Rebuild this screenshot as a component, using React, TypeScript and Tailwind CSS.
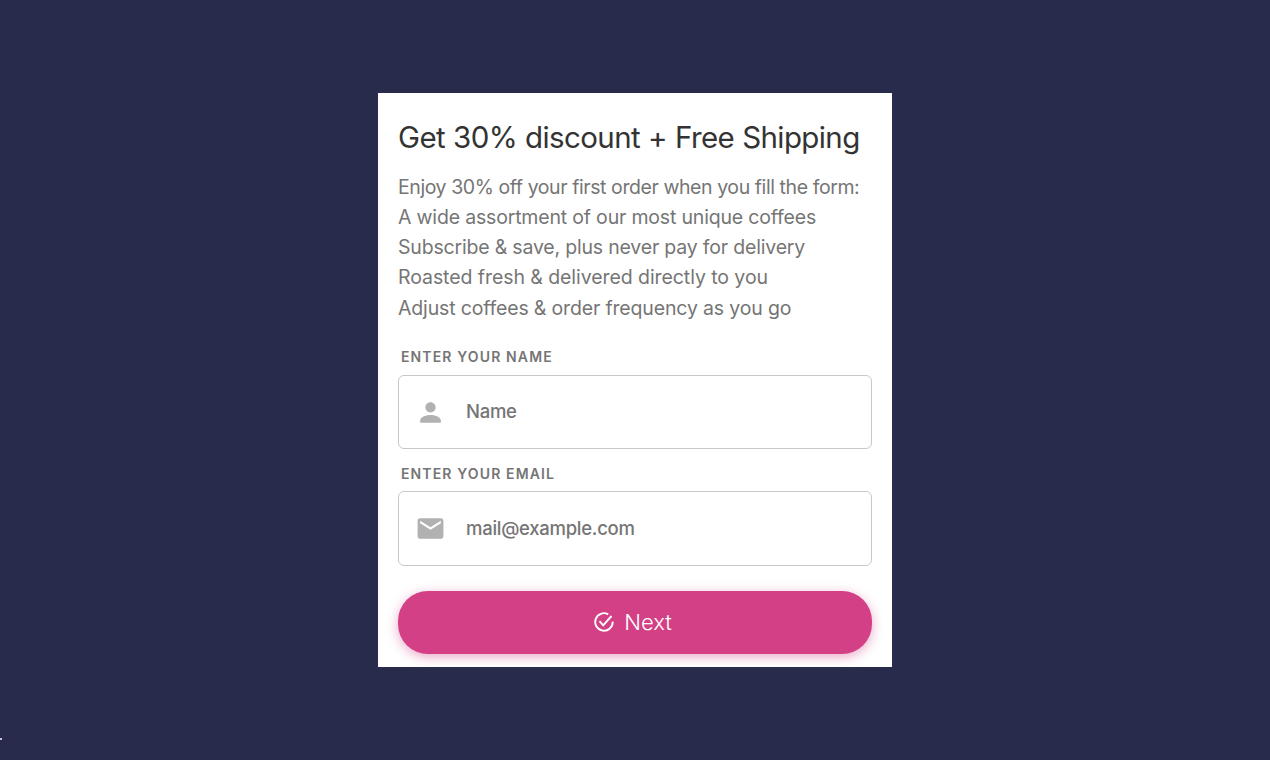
import type { ReactNode } from 'react';
import { MdEmail, MdPerson } from 'react-icons/md';

const BENEFITS = [
  { text: 'Enjoy 30% off your first order when you fill the form:', className: 'tracking-[-0.42px]' },
  { text: 'A wide assortment of our most unique coffees', className: 'tracking-[-0.18px]' },
  { text: 'Subscribe & save, plus never pay for delivery', className: 'tracking-[-0.19px]' },
  { text: 'Roasted fresh & delivered directly to you', className: 'tracking-[-0.07px]' },
  { text: 'Adjust coffees & order frequency as you go', className: 'tracking-[-0.16px]' },
];

interface FieldProps {
  id: string;
  type: string;
  label: string;
  placeholder: string;
  icon: ReactNode;
  className?: string;
  boxClassName: string;
}

function Field({ id, type, label, placeholder, icon, className = '', boxClassName }: FieldProps) {
  return (
    <div className={className}>
      <label
        htmlFor={id}
        className="block h-5 pl-[3px] text-[14px] font-semibold leading-5 tracking-[1.13px] text-[#757575]"
      >
        <span>{label}</span>
      </label>
      <div
        className={`flex items-center rounded-[6px] border border-[#c8c8c8] bg-white pl-4 ${boxClassName}`}
      >
        <span className="shrink-0 text-[31px] text-[#b1b1b1]">{icon}</span>
        <input
          id={id}
          type={type}
          placeholder={placeholder}
          className="ml-5 min-w-0 flex-1 bg-transparent text-[18.5px] font-medium tracking-[-0.27px] text-[#757575] outline-none placeholder:text-[#757575]"
        />
      </div>
    </div>
  );
}

function CheckRingIcon() {
  return (
    <svg
      viewBox="0 0 24 24"
      fill="none"
      stroke="currentColor"
      strokeWidth="1.9"
      className="mb-[2px] size-6 shrink-0"
      aria-hidden
    >
      <path d="M16.2 4.3A8.75 8.75 0 1 0 20.7 11.6" />
      <path d="M7.5 11.1l3.7 4.3 8.3-9.4" />
    </svg>
  );
}

export default function App() {
  return (
    <div className="relative flex h-[760px] w-full justify-center overflow-hidden bg-[#292b4c] pt-[93px] font-['Inter',sans-serif]">
      <form
        className="h-[574px] w-[514px] overflow-hidden bg-white pl-5 pr-5 pt-6"
        onSubmit={(event) => event.preventDefault()}
      >
        <h1 className="h-10 whitespace-nowrap text-[29.5px] leading-10 tracking-[-0.6px] text-[#333333] [word-spacing:0.3px]">
          <span>Get 30% discount + Free Shipping</span>
        </h1>
        <ul className="mt-[15px] h-[151px] text-[19.5px] leading-[30.15px] text-[#757575]">
          {BENEFITS.map(({ text, className }) => (
            <li key={text} className="whitespace-nowrap">
              <span className={className}>{text}</span>
            </li>
          ))}
        </ul>

        <Field
          id="name"
          type="text"
          label="ENTER YOUR NAME"
          placeholder="Name"
          icon={<MdPerson />}
          className="mt-6"
          boxClassName="mt-2 h-[74px]"
        />
        <Field
          id="email"
          type="email"
          label="ENTER YOUR EMAIL"
          placeholder="mail@example.com"
          icon={<MdEmail />}
          className="mt-[15px]"
          boxClassName="mt-[7px] h-[75px]"
        />

        <button
          type="submit"
          className="mt-[25px] flex h-[63px] w-full items-center justify-center gap-2 rounded-[30px] bg-[#d34085] pr-[6px] text-white shadow-[0_3px_12px_rgba(211,64,133,0.45)]"
        >
          <CheckRingIcon />
          <span className="mb-[2px] text-[22px] font-light leading-8">Next</span>
        </button>
      </form>
      <span className="absolute left-0 top-[738px] h-[2px] w-[2px] bg-[#c4c5cf]" aria-hidden />
    </div>
  );
}
